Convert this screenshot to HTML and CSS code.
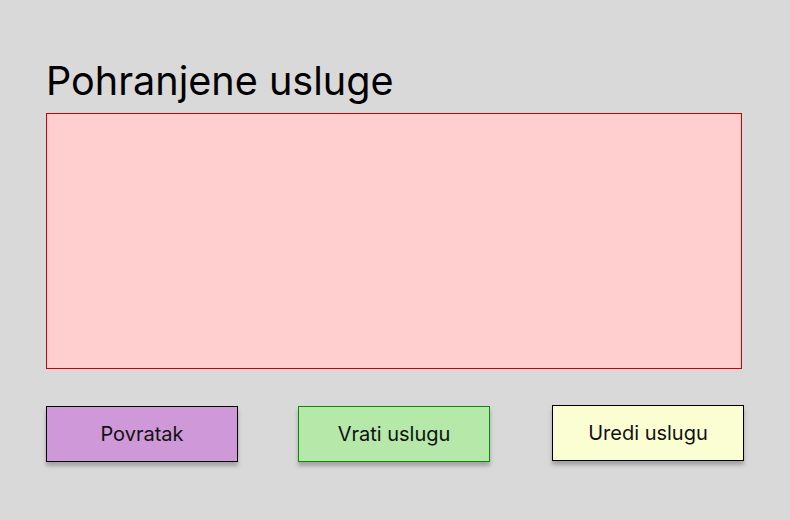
FILE: index.html
```html
<!DOCTYPE html>
<html>
<head>
<meta charset="utf-8">
<link rel="stylesheet" href="styles.css">
</head>
<body>
<main class="page">
  <h1 class="title">Pohranjene usluge</h1>
  <div class="list"></div>
  <div class="actions">
    <button class="btn btn-back">Povratak</button>
    <button class="btn btn-restore">Vrati uslugu</button>
    <button class="btn btn-edit">Uredi uslugu</button>
  </div>
</main>
</body>
</html>
```
FILE: styles.css
```css
html, body {
  margin: 0;
  padding: 0;
  background: #d9d9d9;
  width: 790px;
  height: 520px;
  overflow: hidden;
  font-family: Inter, "Liberation Sans", sans-serif;
}
.page {
  display: flex;
  flex-direction: column;
  padding: 57px 0 0 46px;
  width: 698px;
}
.title {
  margin: 0 0 8px 0;
  font-size: 39.6px;
  font-weight: 400;
  line-height: 48px;
  color: #000;
}
.list {
  width: 694px;
  height: 254px;
  background: #ffcfcf;
  border: 1px solid #d00000;
}
.actions {
  display: flex;
  gap: 60px;
  margin-top: 37px;
}
.btn {
  width: 192px;
  height: 56px;
  box-sizing: border-box;
  border: 1px solid #000;
  font-family: Inter, "Liberation Sans", sans-serif;
  font-size: 20px;
  color: #111;
  box-shadow: 0 4px 4px rgba(0,0,0,0.25);
  padding: 0;
}
.btn-back { background: #cf98d8; }
.btn-restore { background: #b5e8a9; border-color: #0a8a0a; }
.btn-edit { background: #fbfed2; margin-top: -1px; margin-left: 2px; }
```
